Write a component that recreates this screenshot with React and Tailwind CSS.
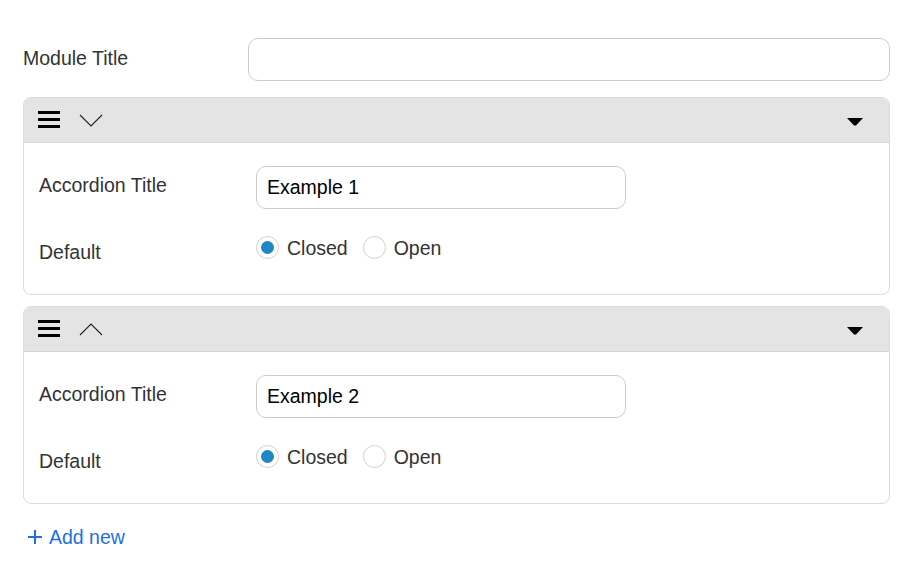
import React, { useState } from 'react';

function Hamburger() {
    return (
        <svg width="22" height="17" viewBox="0 0 22 17" className="block">
            <rect x="0" y="0" width="22" height="3" fill="#000" />
            <rect x="0" y="7" width="22" height="3" fill="#000" />
            <rect x="0" y="14" width="22" height="3" fill="#000" />
        </svg>
    );
}

function Chevron({ up }) {
    return (
        <svg width="24" height="13" viewBox="0 0 24 13" className="block">
            <polyline
                points={up ? '1,12 12,1 23,12' : '1,1 12,12 23,1'}
                fill="none"
                stroke="#222"
                strokeWidth="1.1"
            />
        </svg>
    );
}

function Caret() {
    return (
        <svg width="16" height="8" viewBox="0 0 16 8" className="block">
            <polygon points="0,0 16,0 9,7.5 7,7.5" fill="#000" />
        </svg>
    );
}

function Radio({ checked, label, onClick }) {
    return (
        <button type="button" onClick={onClick} className="flex items-center gap-[8px] cursor-pointer h-[23px]">
            <span className="w-[23px] h-[23px] rounded-full border border-[#cfcfcf] bg-white flex items-center justify-center">
                {checked && <span className="w-[13px] h-[13px] rounded-full bg-[#1e88c6]" />}
            </span>
            <span className="text-[19.5px] leading-[24px] text-[#333]">{label}</span>
        </button>
    );
}

function AccordionItem({ title, open }) {
    const [state, setState] = useState('closed');

    return (
        <div className="border border-[#dcdcdc] rounded-[8px] overflow-hidden bg-white">
            {/* Header */}
            <div className="h-[45px] bg-[#e4e4e4] border-b border-[#d6d6d6] flex items-center pl-[14px] pr-[26px]">
                <div className="-mt-[2px]">
                    <Hamburger />
                </div>
                <div className="ml-[19px] mt-[1px]">
                    <Chevron up={open} />
                </div>
                <div className="ml-auto mt-[4px]">
                    <Caret />
                </div>
            </div>

            {/* Body */}
            <div className="pl-[15px] pt-[23px] pb-[35px]">
                <div className="flex items-start">
                    <div className="w-[217px] mt-[7px] text-[19.5px] leading-[24px] text-[#333]">Accordion Title</div>
                    <input
                        defaultValue={title}
                        className="w-[370px] h-[43px] rounded-[10px] border border-[#cccccc] px-[10px] text-[19.5px] text-black outline-none"
                        style={{ fontFamily: 'inherit' }}
                    />
                </div>
                <div className="flex items-start mt-[27px] h-[23px]">
                    <div className="w-[217px] mt-[4px] text-[19.5px] leading-[24px] text-[#333]">Default</div>
                    <div className="flex items-center gap-[15px]">
                        <Radio checked={state === 'closed'} label="Closed" onClick={() => setState('closed')} />
                        <Radio checked={state === 'open'} label="Open" onClick={() => setState('open')} />
                    </div>
                </div>
            </div>
        </div>
    );
}

export default function App() {
    return (
        <div
            className="w-[900px] h-[562px] bg-white pl-[23px] pr-[10px] pt-[38px]"
            style={{ fontFamily: '"Liberation Sans", Arial, sans-serif' }}
        >
            {/* Module title row */}
            <div className="flex items-center">
                <div className="w-[225px] text-[19.5px] leading-[24px] text-[#333] -mt-[4px]">Module Title</div>
                <input className="flex-1 h-[43px] rounded-[10px] border border-[#cccccc] px-[10px] text-[19.5px] outline-none" />
            </div>

            <div className="mt-[16px] flex flex-col gap-[11px]">
                <AccordionItem title="Example 1" open={false} />
                <AccordionItem title="Example 2" open={true} />
            </div>

            <button type="button" className="mt-[21px] ml-[5px] flex items-center gap-[7px] text-[#1f6fdd] text-[19.5px] leading-[24px]">
                <svg width="14" height="14" viewBox="0 0 14 14" className="block">
                    <rect x="0" y="6" width="14" height="2" fill="#1f6fdd" />
                    <rect x="6" y="0" width="2" height="14" fill="#1f6fdd" />
                </svg>
                <span>Add new</span>
            </button>
        </div>
    );
}
